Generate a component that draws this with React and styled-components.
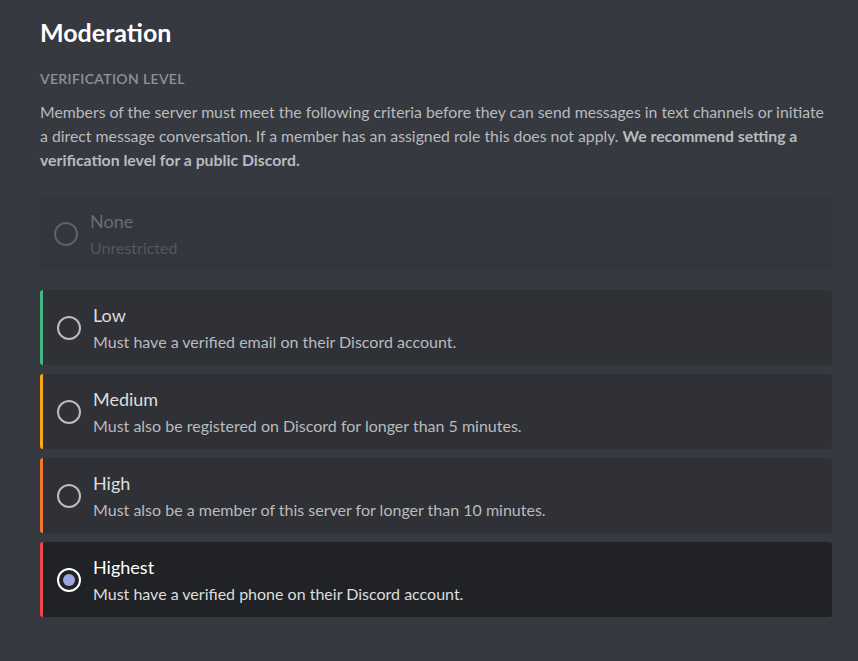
import styled, { createGlobalStyle } from "styled-components";

const GlobalStyle = createGlobalStyle`
  html, body {
    margin: 0;
    padding: 0;
    background: #36393f;
  }
  body {
    font-family: Lato, "Noto Sans", sans-serif;
  }
`;

const Page = styled.div`
  width: 858px;
  height: 661px;
  background: #36393f;
  padding: 17px 26px 0 40px;
  box-sizing: border-box;
  overflow: hidden;
`;

const Title = styled.h1`
  margin: 0;
  font-size: 25px;
  line-height: 30px;
  font-weight: 700;
  color: #ffffff;
`;

const SectionLabel = styled.h5`
  margin: 23px 0 0;
  font-size: 14px;
  line-height: 18px;
  font-weight: 600;
  letter-spacing: 0.35px;
  color: #8e9297;
  text-transform: uppercase;
`;

const Description = styled.p`
  margin: 12px 0 0;
  font-size: 15.8px;
  line-height: 24px;
  color: #b9bbbe;
  width: 792px;

  strong {
    font-weight: 700;
  }
`;

const Options = styled.div`
  display: flex;
  flex-direction: column;
  gap: 9px;
  width: 792px;
  margin-top: 25px;
`;

const Card = styled.div`
  display: flex;
  align-items: center;
  gap: 12px;
  height: ${(p) => (p.$disabled ? "73px" : "75px")};
  box-sizing: border-box;
  padding-left: 14px;
  border-radius: 3px;
  background: ${(p) => (p.$selected ? "#202225" : p.$disabled ? "#33363c" : "#2f3136")};
  border-left: ${(p) => (p.$color ? `3px solid ${p.$color}` : "none")};
  margin-bottom: ${(p) => (p.$disabled ? "11px" : "0")};
`;

const Radio = styled.div`
  width: 24px;
  height: 24px;
  box-sizing: border-box;
  border-radius: 50%;
  border: 2px solid ${(p) => (p.$selected ? "#ffffff" : p.$disabled ? "#5d6066" : "#b9bbbe")};
  display: flex;
  align-items: center;
  justify-content: center;
  flex-shrink: 0;

  &::after {
    content: "";
    display: ${(p) => (p.$selected ? "block" : "none")};
    width: 12px;
    height: 12px;
    border-radius: 50%;
    background: #99a6e0;
  }
`;

const Info = styled.div`
  display: flex;
  flex-direction: column;
  gap: 6px;
  padding-top: 1px;
`;

const Name = styled.div`
  font-size: 18px;
  line-height: 22px;
  color: ${(p) => (p.$selected ? "#ffffff" : p.$disabled ? "#6a6d72" : "#dcddde")};
`;

const Detail = styled.div`
  font-size: 16px;
  line-height: 20px;
  color: ${(p) => (p.$selected ? "#dcddde" : p.$disabled ? "#55585d" : "#b9bbbe")};
`;

const levels = [
  { name: "None", detail: "Unrestricted", disabled: true },
  { name: "Low", detail: "Must have a verified email on their Discord account.", color: "#43b581" },
  { name: "Medium", detail: "Must also be registered on Discord for longer than 5 minutes.", color: "#faa61a" },
  { name: "High", detail: "Must also be a member of this server for longer than 10 minutes.", color: "#f57731" },
  { name: "Highest", detail: "Must have a verified phone on their Discord account.", color: "#f04747", selected: true },
];

export default function App() {
  return (
    <>
      <GlobalStyle />
      <Page>
        <Title>Moderation</Title>
        <SectionLabel>Verification Level</SectionLabel>
        <Description>
          Members of the server must meet the following criteria before they can send messages in text
          channels or initiate a direct message conversation. If a member has an assigned role this does not
          apply. <strong>We recommend setting a verification level for a public Discord.</strong>
        </Description>
        <Options>
          {levels.map((l) => (
            <Card key={l.name} $color={l.color} $selected={l.selected} $disabled={l.disabled}>
              <Radio $selected={l.selected} $disabled={l.disabled} />
              <Info>
                <Name $selected={l.selected} $disabled={l.disabled}>{l.name}</Name>
                <Detail $selected={l.selected} $disabled={l.disabled}>{l.detail}</Detail>
              </Info>
            </Card>
          ))}
        </Options>
      </Page>
    </>
  );
}
